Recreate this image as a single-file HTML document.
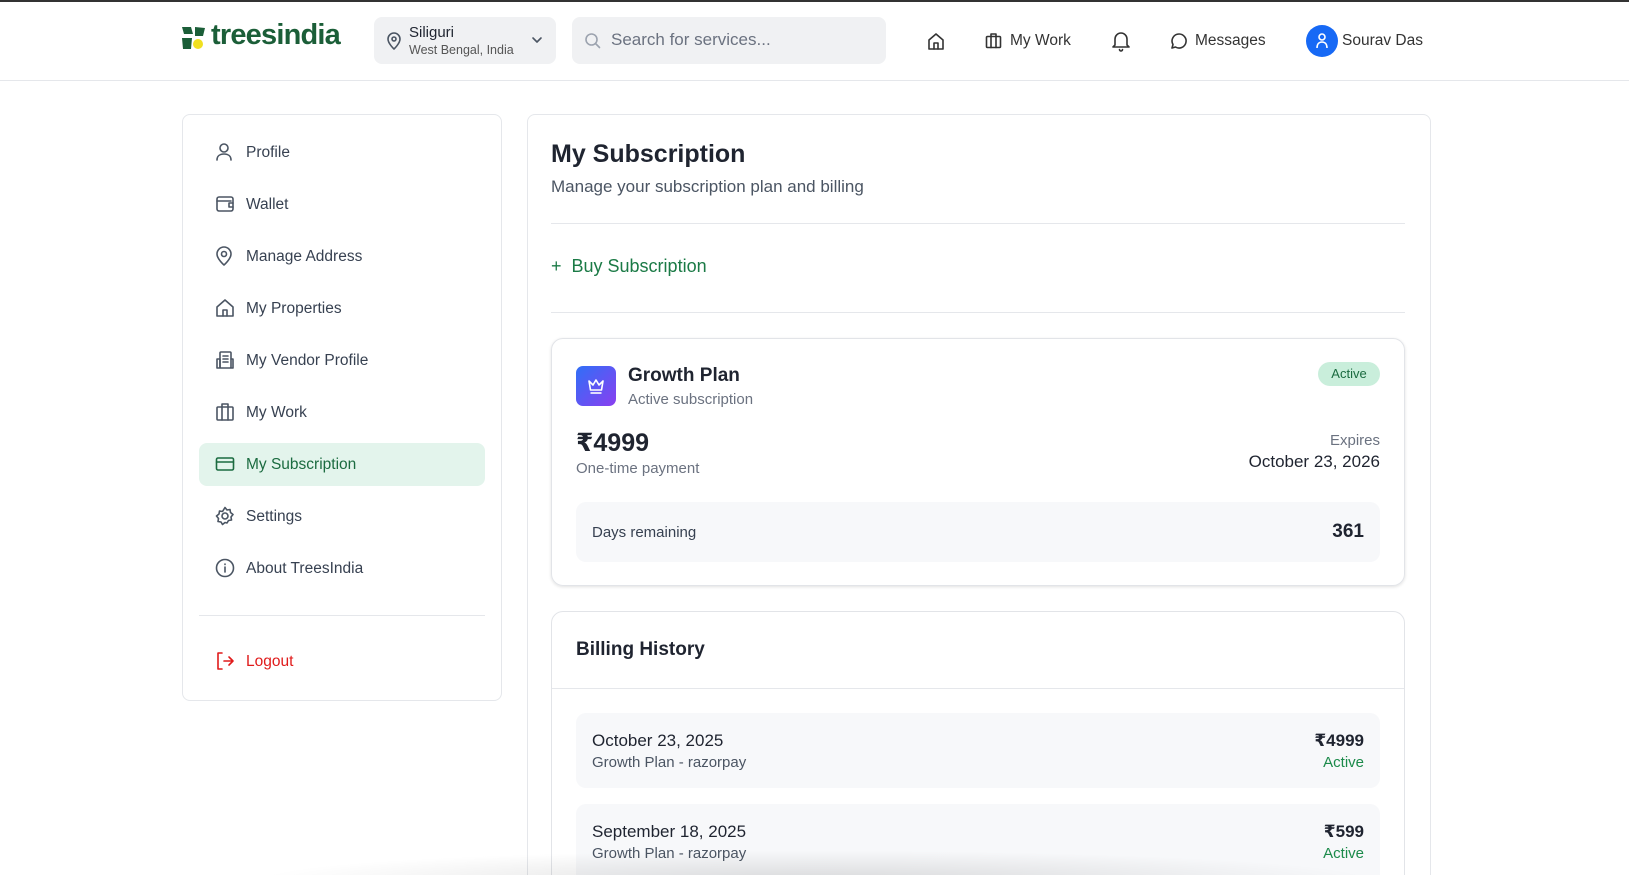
<!DOCTYPE html><html style="height:875px;overflow:hidden"><head><meta charset="utf-8"><style>
*{box-sizing:border-box;margin:0;padding:0}
body{width:1629px;height:875px;overflow:hidden;background:#fff;font-family:"Liberation Sans","DejaVu Sans",sans-serif;color:#1f2430;position:relative}
.a{position:absolute}
.hdr{left:0;top:0;width:1629px;height:81px;border-top:2px solid #333;border-bottom:1px solid #e5e7eb;background:#fff}
svg{display:block}
.ic{stroke:#4b5563;fill:none;stroke-width:1.6;stroke-linecap:round;stroke-linejoin:round}
.side{left:182px;top:114px;width:320px;height:587px;border:1px solid #e5e7eb;border-radius:8px}
.it{left:199px;width:286px;height:43px;border-radius:8px;font-size:15.5px;color:#374151}
.it svg{position:absolute;left:16px;top:11px}
.it span{position:absolute;left:47px;top:13px}
.main{left:527px;top:114px;width:904px;height:800px;border:1px solid #e5e7eb;border-radius:8px}
.row{left:576px;width:804px;height:75px;background:#f7f8fa;border-radius:10px}
</style></head><body>
<div class="a hdr"></div>
<svg class="a" style="left:181px;top:25px" width="26" height="26" viewBox="0 0 26 26"><path d="M1 2h9l2 7H3z" fill="#1b5e38"/><path d="M14 2l10 1-2 8h-8z" fill="#1b5e38"/><path d="M1 13h10l-1 11H2z" fill="#1b5e38"/><circle cx="17" cy="19" r="5" fill="#f0e020"/></svg>
<div class="a" style="left:211px;top:19px;font-size:29px;font-weight:bold;color:#1b5e38;letter-spacing:-0.8px">treesindia</div>
<div class="a" style="left:374px;top:17px;width:182px;height:47px;background:#f0f1f3;border-radius:8px"></div>
<svg class="a ic" style="left:386px;top:32px" width="16" height="18" viewBox="0 0 16 18"><path d="M8 17s6-5.5 6-10A6 6 0 0 0 2 7c0 4.5 6 10 6 10z"/><circle cx="8" cy="7" r="2"/></svg>
<div class="a" style="left:409px;top:24px;font-size:15px;color:#1f2430">Siliguri</div>
<div class="a" style="left:409px;top:43px;font-size:12.5px;color:#555">West Bengal, India</div>
<svg class="a ic" style="left:531px;top:36px" width="12" height="8" viewBox="0 0 12 8"><path d="M2 2l4 4 4-4"/></svg>
<div class="a" style="left:572px;top:17px;width:314px;height:47px;background:#f0f1f3;border-radius:8px"></div>
<svg class="a ic" style="left:584px;top:32px;stroke:#9ca3af" width="17" height="17" viewBox="0 0 17 17"><circle cx="7.5" cy="7.5" r="5.5"/><path d="M12 12l3.5 3.5"/></svg>
<div class="a" style="left:611px;top:30px;font-size:17px;color:#6b7280">Search for services...</div>
<svg class="a ic" style="left:926px;top:31px;stroke:#333" width="20" height="20" viewBox="0 0 20 20"><path d="M3 9l7-6 7 6v9H3z"/><path d="M8 18v-6h4v6"/></svg>
<svg class="a ic" style="left:985px;top:32px;stroke:#333" width="17" height="17" viewBox="0 0 17 17"><rect x="1.5" y="4.5" width="14" height="11" rx="1"/><path d="M6 4.5V2h5v2.5M6 4.5v11M11 4.5v11"/></svg>
<div class="a" style="left:1010px;top:32px;font-size:15.5px;color:#333">My Work</div>
<svg class="a ic" style="left:1111px;top:30px;stroke:#333" width="20" height="22" viewBox="0 0 20 22"><path d="M4 15V9a6 6 0 0 1 12 0v6l2 2H2z"/><path d="M8.5 19.5a1.5 1.5 0 0 0 3 0"/></svg>
<svg class="a ic" style="left:1170px;top:32px;stroke:#333" width="18" height="18" viewBox="0 0 18 18"><path d="M9 2a7 7 0 1 1-3.5 13L2 16l1-3.5A7 7 0 0 1 9 2z"/></svg>
<div class="a" style="left:1195px;top:32px;font-size:15.5px;color:#333">Messages</div>
<div class="a" style="left:1306px;top:25px;width:32px;height:32px;border-radius:50%;background:#1769f5"></div>
<svg class="a" style="left:1314px;top:32px;stroke:#fff;fill:none;stroke-width:1.6" width="16" height="18" viewBox="0 0 16 18"><circle cx="8" cy="5" r="3"/><path d="M3 16c0-4 2-6 5-6s5 2 5 6"/></svg>
<div class="a" style="left:1342px;top:32px;font-size:15.5px;color:#333">Sourav Das</div>

<div class="a side"></div>
<div class="a it" style="top:131px"><svg class="ic" width="18" height="20" viewBox="0 0 18 20"><circle cx="9" cy="6" r="4"/><path d="M2 18c0-4 3-6 7-6s7 2 7 6"/></svg><span>Profile</span></div>
<div class="a it" style="top:183px"><svg class="ic" width="20" height="20" viewBox="0 0 20 20"><rect x="2" y="3" width="16" height="14" rx="2"/><path d="M2 7h14M18 9h-4v4h4"/></svg><span>Wallet</span></div>
<div class="a it" style="top:235px"><svg class="ic" width="18" height="20" viewBox="0 0 18 20"><path d="M9 19s7-6 7-11A7 7 0 0 0 2 8c0 5 7 11 7 11z"/><circle cx="9" cy="8" r="2.5"/></svg><span>Manage Address</span></div>
<div class="a it" style="top:287px"><svg class="ic" width="20" height="20" viewBox="0 0 20 20"><path d="M2 9l8-7 8 7v9H2z"/><path d="M8 18v-6h4v6"/></svg><span>My Properties</span></div>
<div class="a it" style="top:339px"><svg class="ic" width="20" height="20" viewBox="0 0 20 20"><rect x="5" y="2" width="11" height="16" rx="1"/><path d="M2 9h3v9H2zM16 9h2v9h-2M8 6h5M8 9h5M8 12h5"/></svg><span>My Vendor Profile</span></div>
<div class="a it" style="top:391px"><svg class="ic" width="20" height="20" viewBox="0 0 20 20"><rect x="2" y="5" width="16" height="13" rx="1"/><path d="M7 5V2h6v3M7 5v13M13 5v13"/></svg><span>My Work</span></div>
<div class="a it" style="top:443px;background:#e3f4ec;color:#1b6b40"><svg class="ic" style="stroke:#1b6b40" width="20" height="20" viewBox="0 0 20 20"><rect x="1.5" y="4" width="17" height="12" rx="1.5"/><path d="M1.5 8h17"/></svg><span>My Subscription</span></div>
<div class="a it" style="top:495px"><svg class="ic" width="20" height="20" viewBox="0 0 20 20"><circle cx="10" cy="10" r="3"/><path d="M10 1.5l2 2.5 3-.5.5 3 2.5 2-2 2.5.5 3-3 .5-1.5 2.5L10 16.5 7.5 18.5 6 16l-3-.5.5-3-2-2.5 2.5-2 .5-3 3 .5z"/></svg><span>Settings</span></div>
<div class="a it" style="top:547px"><svg class="ic" width="20" height="20" viewBox="0 0 20 20"><circle cx="10" cy="10" r="8.5"/><path d="M10 9v5M10 6v.5"/></svg><span>About TreesIndia</span></div>
<div class="a" style="left:199px;top:615px;width:286px;height:1px;background:#e5e7eb"></div>
<div class="a it" style="top:640px;color:#e01b1b"><svg class="ic" style="stroke:#e01b1b" width="20" height="20" viewBox="0 0 20 20"><path d="M7 2H3v16h4M9 10h9M14 6l4 4-4 4"/></svg><span>Logout</span></div>

<div class="a main"></div>
<div class="a" style="left:551px;top:140px;font-size:25px;font-weight:bold;color:#1f2430">My Subscription</div>
<div class="a" style="left:551px;top:177px;font-size:17px;color:#4b5563">Manage your subscription plan and billing</div>
<div class="a" style="left:551px;top:223px;width:854px;height:1px;background:#e5e7eb"></div>
<div class="a" style="left:551px;top:256px;font-size:18px;color:#1b7a46">+&nbsp; Buy Subscription</div>
<div class="a" style="left:551px;top:312px;width:854px;height:1px;background:#e5e7eb"></div>

<div class="a" style="left:551px;top:338px;width:854px;height:248px;border:1px solid #e2e4e8;border-radius:12px;box-shadow:0 1px 3px rgba(0,0,0,.12)"></div>
<div class="a" style="left:576px;top:366px;width:40px;height:40px;border-radius:7px;background:linear-gradient(135deg,#2f6ff7,#8a3ff0)"></div>
<svg class="a" style="left:586px;top:376px;stroke:#fff;fill:none;stroke-width:1.6;stroke-linejoin:round" width="20" height="20" viewBox="0 0 20 20"><path d="M3 5l4 4 3-5 3 5 4-4-1.5 9h-11z"/><path d="M4.5 17h11"/></svg>
<div class="a" style="left:628px;top:365px;font-size:19px;font-weight:bold">Growth Plan</div>
<div class="a" style="left:628px;top:391px;font-size:15px;color:#6b7280">Active subscription</div>
<div class="a" style="left:1318px;top:362px;width:62px;height:24px;border-radius:12px;background:#c9eedb;color:#1b6b40;font-size:13px;text-align:center;line-height:24px">Active</div>
<div class="a" style="left:576px;top:428px;font-size:25px;font-weight:bold">₹4999</div>
<div class="a" style="left:576px;top:460px;font-size:15px;color:#6b7280">One-time payment</div>
<div class="a" style="left:1180px;top:432px;width:200px;text-align:right;font-size:15px;color:#6b7280">Expires</div>
<div class="a" style="left:1130px;top:452px;width:250px;text-align:right;font-size:17px;color:#1f2430">October 23, 2026</div>
<div class="a" style="left:576px;top:502px;width:804px;height:60px;background:#f7f8fa;border-radius:10px"></div>
<div class="a" style="left:592px;top:524px;font-size:15px;color:#374151">Days remaining</div>
<div class="a" style="left:1260px;top:521px;width:104px;text-align:right;font-size:19px;font-weight:bold">361</div>

<div class="a" style="left:551px;top:611px;width:854px;height:300px;border:1px solid #e2e4e8;border-radius:12px"></div>
<div class="a" style="left:576px;top:639px;font-size:19px;font-weight:bold">Billing History</div>
<div class="a" style="left:552px;top:688px;width:852px;height:1px;background:#e5e7eb"></div>
<div class="a row" style="top:713px"></div>
<div class="a" style="left:592px;top:731px;font-size:17px">October 23, 2025</div>
<div class="a" style="left:592px;top:754px;font-size:15px;color:#4b5563">Growth Plan - razorpay</div>
<div class="a" style="left:1250px;top:731px;width:114px;text-align:right;font-size:17px;font-weight:bold">₹4999</div>
<div class="a" style="left:1250px;top:754px;width:114px;text-align:right;font-size:15px;color:#1b8a4a">Active</div>
<div class="a row" style="top:804px;height:90px"></div>
<div class="a" style="left:592px;top:822px;font-size:17px">September 18, 2025</div>
<div class="a" style="left:592px;top:845px;font-size:15px;color:#4b5563">Growth Plan - razorpay</div>
<div class="a" style="left:1250px;top:822px;width:114px;text-align:right;font-size:17px;font-weight:bold">₹599</div>
<div class="a" style="left:1250px;top:845px;width:114px;text-align:right;font-size:15px;color:#1b8a4a">Active</div>
<div class="a" style="left:250px;top:850px;width:1130px;height:30px;background:radial-gradient(ellipse at 50% 100%,rgba(0,0,0,.12),rgba(0,0,0,0) 70%)"></div>
</body></html>
